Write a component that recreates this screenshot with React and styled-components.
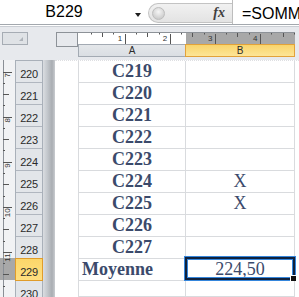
import styled, { createGlobalStyle } from 'styled-components';

const GlobalStyle = createGlobalStyle`
  html, body { margin: 0; padding: 0; background: #fff; }
  body { width: 299px; height: 297px; overflow: hidden; }
`;

const Window = styled.div`
  width: 299px;
  height: 297px;
  overflow: hidden;
  display: flex;
  flex-direction: column;
  font-family: "Liberation Sans", Arial, sans-serif;
  background: #fff;
`;

// formula bar
const FormulaBar = styled.div`
  flex: none;
  height: 24px;
  display: flex;
  border-bottom: 1px solid #a3a8ae;
  margin-bottom: 1px;
`;

const NameBox = styled.div`
  width: 128px;
  text-align: center;
  font-size: 16px;
  line-height: 24px;
  color: #000;
`;

const DropArrow = styled.div`
  width: 20px;
  display: flex;
  justify-content: center;
  padding-top: 13px;
  box-sizing: border-box;
  &::after {
    content: '';
    width: 0;
    height: 0;
    border-left: 3px solid transparent;
    border-right: 3px solid transparent;
    border-top: 4px solid #1e1e1e;
  }
`;

const FxPill = styled.div`
  width: 84px;
  height: 20px;
  margin-top: 3px;
  box-sizing: border-box;
  background: linear-gradient(#f1f1f1, #e3e3e3);
  border: 1px solid #c3c3c3;
  border-right: none;
  border-radius: 10px 0 0 10px;
  display: flex;
  align-items: center;
  padding-left: 3px;
`;

const ExpandKnob = styled.span`
  width: 11px;
  height: 11px;
  border-radius: 50%;
  background: radial-gradient(circle at 50% 35%, #f6f6f6, #cdcdcd 75%);
  border: 1px solid #bdbdbd;
`;

const FxLabel = styled.span`
  margin-left: auto;
  margin-right: 7px;
  font: italic bold 14px "Liberation Serif", serif;
  color: #3f3f3f;
`;

const FormulaText = styled.div`
  flex: 1;
  border-left: 1px solid #bdbdbd;
  padding: 5px 0 0 9px;
  font-size: 16px;
  line-height: 18px;
  color: #000;
  white-space: nowrap;
  overflow: hidden;
`;

// column header band
const HeaderBand = styled.div`
  flex: none;
  border-top: 1px solid #c9cdd3;
  background: #e7e9ed;
  display: grid;
  grid-template-columns: 2px 26px 28px 22px 107px 110px 1fr;
  grid-template-rows: 12px 13px;
  padding: 5px 0 3px;
`;

const SelectAll = styled.div`
  grid-column: 2;
  grid-row: 1;
  height: 13px;
  box-sizing: border-box;
  background: #dfe2e6;
  border: 1px solid #a6acb4;
  position: relative;
  &::after {
    content: '';
    position: absolute;
    right: 4px;
    bottom: 3px;
    border-left: 4px solid transparent;
    border-bottom: 4px solid #aeb3ba;
  }
`;

const RulerSlot = styled.div`
  grid-column: 4 / 7;
  grid-row: 1;
  svg { display: block; overflow: visible; }
`;

const ColHead = styled.div`
  grid-row: 2;
  grid-column: ${p => p.col};
  box-sizing: border-box;
  font-size: 10px;
  line-height: 11px;
  text-align: center;
  color: #2c2c2c;
  border: 1px solid ${p => (p.selected ? '#e2a23a' : '#a3aab3')};
  border-right-width: ${p => (p.selected ? '1px' : '0')};
  background: ${p =>
    p.selected
      ? 'linear-gradient(#f9d46c, #fde597)'
      : 'linear-gradient(#e4e7ea, #dadee3)'};
`;

// body
const Body = styled.div`
  flex: 1;
  display: flex;
  min-height: 0;
`;

const VRulerSlot = styled.div`
  width: 15px;
  flex: none;
  svg { display: block; }
`;

const RowHeads = styled.div`
  width: 28px;
  flex: none;
  box-sizing: border-box;
  border-left: 1px solid #a9b0b9;
  border-right: 1px solid #a9b0b9;
  border-top: 1px solid #a9b0b9;
  background: #e2e5e9;
`;

const RowHead = styled.div`
  height: 22px;
  box-sizing: border-box;
  border-bottom: 1px solid ${p => (p.selected ? '#e09c2a' : '#b0b6bf')};
  font-size: 11px;
  line-height: 16px;
  padding-top: 5px;
  text-align: center;
  letter-spacing: -0.3px;
  color: #2a2a2a;
  background: ${p => (p.selected ? 'linear-gradient(#fcd66a, #ffdf80)' : 'transparent')};
  box-shadow: ${p =>
    p.selected ? '0 -1px 0 #e09c2a, inset 1px 0 0 #e09c2a, inset -1px 0 0 #e09c2a' : 'none'};
  margin: ${p => (p.selected ? '0 -1px' : '0')};
`;

const PageShadow = styled.div`
  width: 12px;
  flex: none;
  background: linear-gradient(to right, #dadde1, #c4c8cd 35%, #a9adb2 75%, #c9ccd0);
`;

const Page = styled.div`
  flex: 1;
  background: #fff;
  border-top: 1px dotted #dedfe2;
  display: flex;
`;

const PageMargin = styled.div`
  width: 23px;
  flex: none;
`;

const Sheet = styled.div`
  display: flex;
  flex-direction: column;
`;

const Row = styled.div`
  display: grid;
  grid-template-columns: 107px 110px;
  height: 22px;
`;

const Cell = styled.div`
  position: relative;
  box-sizing: border-box;
  border-bottom: 1px solid #d9dbde;
  border-left: 1px solid #d9dbde;
  border-right: ${p => (p.last ? '1px solid #d9dbde' : 'none')};
  font-family: "Liberation Serif", "Times New Roman", serif;
  font-size: 18px;
  line-height: 21px;
  font-weight: ${p => (p.bold ? 700 : 400)};
  text-align: ${p => (p.left ? 'left' : 'center')};
  padding-left: ${p => (p.left ? '3px' : '0')};
  color: #3b4a6b;
  white-space: nowrap;
`;

const Selection = styled.div`
  position: absolute;
  top: -2px;
  left: -1px;
  right: -1px;
  bottom: 0;
  border: 2px solid #10223d;
  box-shadow: 0 0 0 1px #3586dc, inset 0 0 0 1px #3586dc;
  pointer-events: none;
`;

const FillHandle = styled.div`
  position: absolute;
  right: -4px;
  bottom: -4px;
  width: 5px;
  height: 5px;
  background: #111;
  border: 1px solid #fff;
`;

// rulers
const Q = 11.275;

function HRuler() {
  const w = 239;
  const start = 23.6;
  const ticks = [];
  for (let k = 1; start + k * Q < w; k++) {
    const x = Math.round(start + k * Q) + 0.5;
    let y2 = 2.5;
    if (k % 4 === 0) y2 = 12;
    else if (k % 4 === 2) y2 = 5;
    ticks.push(
      <line key={k} x1={x} x2={x} y1={k % 4 === 0 ? 2 : 1} y2={y2} stroke="#555" strokeWidth="1" />
    );
  }
  const nums = [1, 2, 3, 4].map(n => (
    <text key={n} x={start + n * 4 * Q - 2.5} y="9" fontSize="8" textAnchor="end"
      fontFamily="Liberation Sans, Arial, sans-serif" fill="#333">{n}</text>
  ));
  return (
    <svg width={w} height="15">
      <rect x="0.5" y="0.5" width="21" height="14" fill="#e7e9ed" stroke="#8d9298" />
      <rect x="22" y="0" width="108" height="12" fill="#fff" />
      <rect x="130" y="0" width="109" height="12" fill="#a8a8a8" />
      <line x1="22" x2={w} y1="0.5" y2="0.5" stroke="#8d9298" />
      {ticks}
      {nums}
    </svg>
  );
}

function VRuler() {
  const h = 237;
  const start = 11.5;
  const ticks = [];
  for (let k = 0; start + k * Q < h; k++) {
    const y = Math.round(start + k * Q) + 0.5;
    let x2 = 5;
    if (k % 4 === 0) x2 = 12;
    else if (k % 4 === 2) x2 = 9;
    ticks.push(<line key={k} x1="3" x2={x2} y1={y} y2={y} stroke="#555" strokeWidth="1" />);
  }
  const nums = [7, 8, 9, 10, 11].map((n, i) => {
    const y = start + i * 4 * Q + 1.5;
    return (
      <text key={n} transform={`translate(9.5 ${y}) rotate(-90)`} fontSize="8" textAnchor="end"
        fontFamily="Liberation Sans, Arial, sans-serif" fill="#333">{n}</text>
    );
  });
  return (
    <svg width="15" height={h}>
      <rect x="0" y="0" width="15" height={h} fill="#f1f2f4" />
      <rect x="0" y="198" width="15" height="22" fill="#a8a8a8" />
      <line x1="3.5" x2="3.5" y1="0" y2={h} stroke="#8a8f96" />
      {ticks}
      {nums}
    </svg>
  );
}

const ROWS = [
  { n: 220, a: 'C219' },
  { n: 221, a: 'C220' },
  { n: 222, a: 'C221' },
  { n: 223, a: 'C222' },
  { n: 224, a: 'C223' },
  { n: 225, a: 'C224', b: 'X' },
  { n: 226, a: 'C225', b: 'X' },
  { n: 227, a: 'C226' },
  { n: 228, a: 'C227' },
  { n: 229, a: 'Moyenne', b: '224,50', selected: true },
  { n: 230 },
];

export default function App() {
  return (
    <>
      <GlobalStyle />
      <Window>
        <FormulaBar>
          <NameBox>B229</NameBox>
          <DropArrow />
          <FxPill>
            <ExpandKnob />
            <FxLabel>fx</FxLabel>
          </FxPill>
          <FormulaText>=SOMM</FormulaText>
        </FormulaBar>

        <HeaderBand>
          <SelectAll />
          <RulerSlot>
            <HRuler />
          </RulerSlot>
          <ColHead col={5}>A</ColHead>
          <ColHead col={6} selected>B</ColHead>
        </HeaderBand>

        <Body>
          <VRulerSlot>
            <VRuler />
          </VRulerSlot>
          <RowHeads>
            {ROWS.map(r => (
              <RowHead key={r.n} selected={r.selected}>{r.n}</RowHead>
            ))}
          </RowHeads>
          <PageShadow />
          <Page>
            <PageMargin />
            <Sheet>
              {ROWS.map(r => (
                <Row key={r.n}>
                  <Cell bold left={r.a === 'Moyenne'}>{r.a}</Cell>
                  <Cell last>
                    {r.b}
                    {r.selected && (
                      <Selection>
                        <FillHandle />
                      </Selection>
                    )}
                  </Cell>
                </Row>
              ))}
            </Sheet>
          </Page>
        </Body>
      </Window>
    </>
  );
}
